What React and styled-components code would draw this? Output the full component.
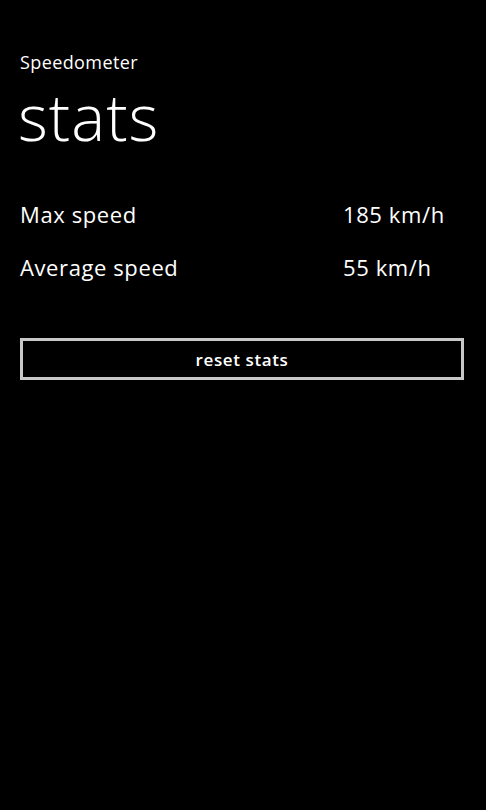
import React from "react";
import styled, { createGlobalStyle } from "styled-components";

const Global = createGlobalStyle`
  html, body { margin: 0; padding: 0; background: #000; }
  body { font-family: "Open Sans", "Noto Sans", sans-serif; color: #fff; }
`;

const Page = styled.div`
  width: 486px;
  height: 810px;
  background: #000;
  box-sizing: border-box;
  padding: 50px 22px 0 20px;
  display: flex;
  flex-direction: column;
`;

const AppTitle = styled.div`
  font-size: 18px;
  line-height: 24px;
  font-weight: 400;
  letter-spacing: 0.4px;
`;

const PageTitle = styled.h1`
  margin: 7px 0 0 -2px;
  font-size: 64px;
  line-height: 72px;
  font-weight: 300;
  letter-spacing: 1px;
`;

const Stats = styled.div`
  margin-top: 47px;
  display: grid;
  grid-template-columns: 323px auto;
  row-gap: 24px;
`;

const Cell = styled.div`
  font-size: 22px;
  line-height: 29px;
  font-weight: 400;
  letter-spacing: 0.6px;
`;

const ResetButton = styled.button`
  margin-top: 56px;
  width: 444px;
  height: 42px;
  background: transparent;
  border: 3px solid #c8c8c8;
  color: #fff;
  font-family: "Open Sans", "Noto Sans", sans-serif;
  font-size: 17px;
  font-weight: 600;
  letter-spacing: 0.6px;
  padding: 0;
  cursor: pointer;
`;

const stats = [
  ["Max speed", "185 km/h"],
  ["Average speed", "55 km/h"],
];

export default function App() {
  return (
    <>
      <Global />
      <Page>
        <AppTitle>Speedometer</AppTitle>
        <PageTitle>stats</PageTitle>
        <Stats>
          {stats.map(([k, v]) => (
            <React.Fragment key={k}>
              <Cell>{k}</Cell>
              <Cell>{v}</Cell>
            </React.Fragment>
          ))}
        </Stats>
        <ResetButton>reset stats</ResetButton>
      </Page>
    </>
  );
}
